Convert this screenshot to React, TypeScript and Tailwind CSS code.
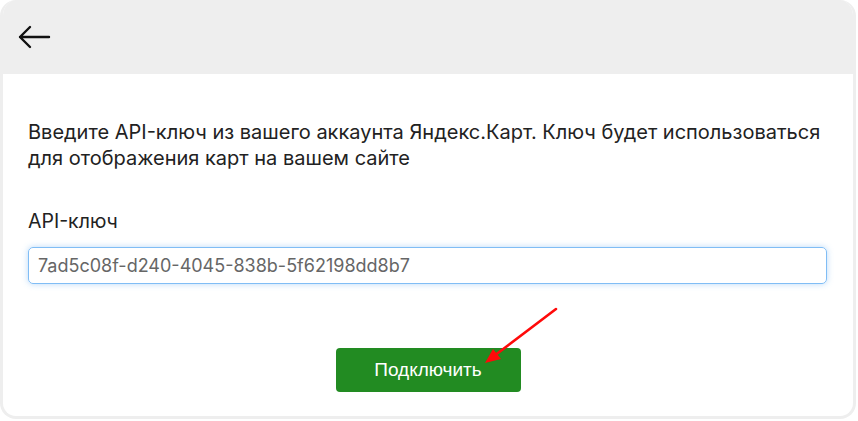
import React from "react";

const ArrowLeft = () => (
  <svg width="34" height="24" viewBox="0 0 34 24" fill="none">
    <path d="M32 12H3M13 2L3 12l10 10" stroke="#111" strokeWidth="2.4" strokeLinecap="round" strokeLinejoin="round" />
  </svg>
);

const Pointer = () => (
  <svg className="absolute left-[480px] top-[305px] pointer-events-none" width="82" height="64" viewBox="0 0 82 64">
    <line x1="76" y1="4" x2="14" y2="51" stroke="#ff0a0a" strokeWidth="2.6" strokeLinecap="round" />
    <polygon points="5,58 13,44 21,54" fill="#ff0a0a" />
  </svg>
);

export default function App() {
  return (
    <div className="relative w-[858px] h-[421px] bg-white font-['Inter',sans-serif]">
      <div className="w-[856px] h-[419px] rounded-[16px] border-[3px] border-t-0 border-[#eeeeee] overflow-hidden flex flex-col">
        <div className="h-[74px] bg-[#eeeeee] flex items-center pl-[14px] shrink-0">
          <ArrowLeft />
        </div>
        <div className="flex-1 px-[25px] pt-[45px]">
          <p className="text-[20px] leading-[26px] text-[#222]">
            Введите API-ключ из вашего аккаунта Яндекс.Карт. Ключ будет использоваться для отображения карт на вашем сайте
          </p>
          <div className="mt-[37px] text-[19.5px] leading-[26px] text-[#222]">API-ключ</div>
          <input
            readOnly
            value="7ad5c08f-d240-4045-838b-5f62198dd8b7"
            className="mt-[13px] w-[799px] h-[37px] rounded-[5px] border border-[#80bdf5] px-[9px] text-[18px] text-[#666] outline-none shadow-[0_0_6px_rgba(100,170,240,0.45)] font-['Inter',sans-serif]"
          />
          <div className="flex justify-center mt-[64px]">
            <button className="w-[185px] h-[44px] rounded-[4px] bg-[#228b22] text-white text-[19px] font-['Liberation_Sans',sans-serif]">
              Подключить
            </button>
          </div>
        </div>
      </div>
      <Pointer />
    </div>
  );
}
